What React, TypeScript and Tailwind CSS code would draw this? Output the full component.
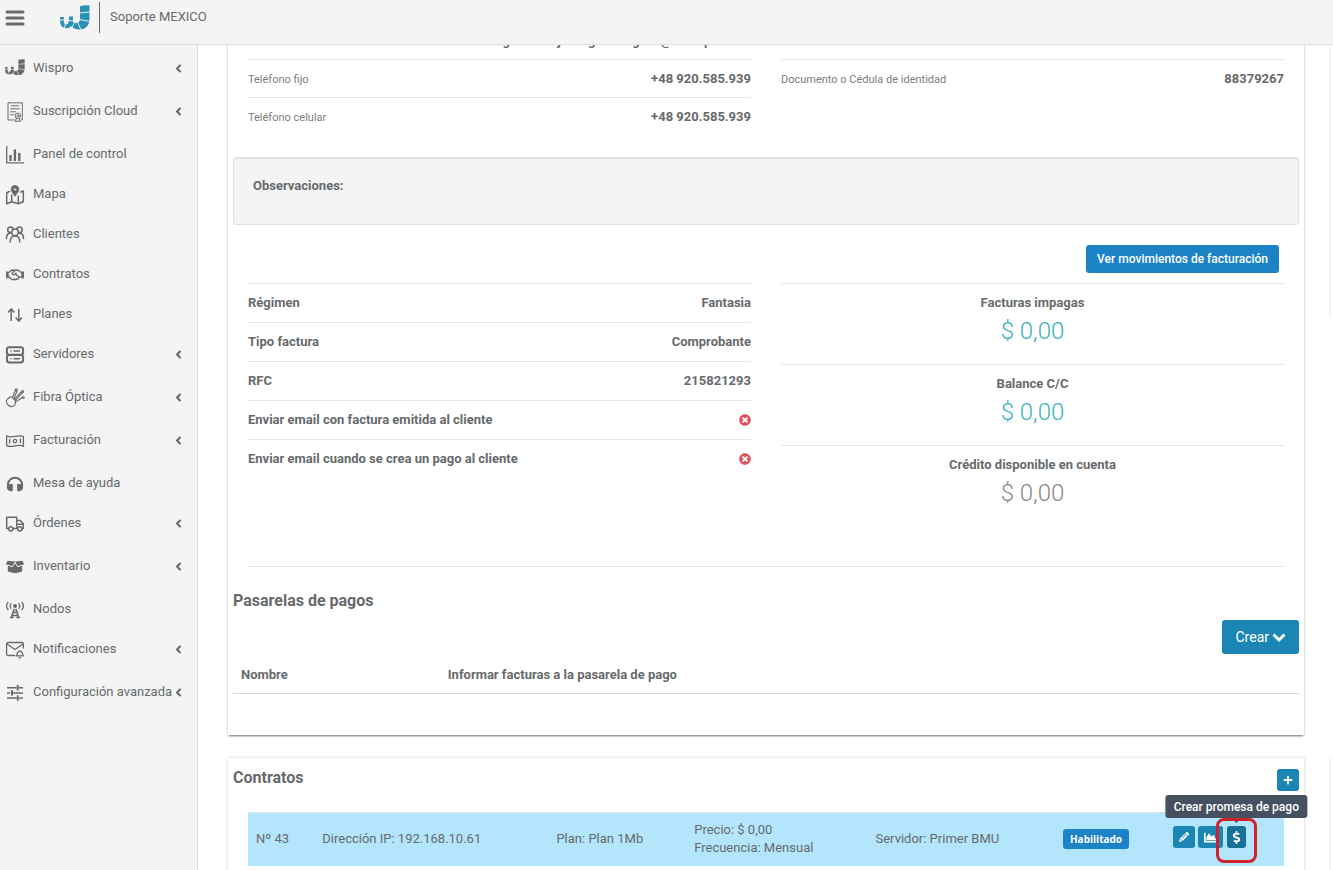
import React from "react";
import {
  FaAngleLeft,
  FaBoxOpen,
  FaChartArea,
  FaDollarSign,
  FaPlus,
  FaRegHandshake,
  FaTimesCircle,
} from "react-icons/fa";
import { FaPencil } from "react-icons/fa6";

function Logo({ className }: { className: string }) {
  return (
    <svg viewBox="0 0 30 25" className={className} fill="none" aria-hidden="true">
      <path d="M2 12v4c0 3.600 1.800 5.400 4.200 5.400s4-2 4.400-5.200" stroke="currentColor" strokeWidth="3.800" />
      <path d="M11 11.500v5c.3 2.500 1.400 3.800 3.400 4.300" stroke="currentColor" strokeWidth="4" />
      <path
        d="M20 1.200Q25-.3 29.500.5V14c0 6.500-4 10.500-10 10.500-4 0-7-1.500-8.500-4.500l3.500-2.500c2.500 1.500 5.500 0 5.500-3.500z"
        fill="currentColor"
      />
      <g stroke="#f4f4f4" strokeWidth="0.900">
        <path d="M19 8 30 7M19.500 14.500l10.500 2M17.500 17l3.500 8M0 15.200l4.500-.5M4 24l1.500-5M8.600 15.500l5 .5M11.500 23.500l3-5.500" />
      </g>
    </svg>
  );
}

type IconProps = { children: React.ReactNode };

function Glyph({ children }: IconProps) {
  return (
    <svg
      viewBox="0 0 20 20"
      className="size-5"
      fill="none"
      stroke="currentColor"
      strokeWidth="1.500"
      strokeLinecap="round"
      strokeLinejoin="round"
      aria-hidden="true"
    >
      {children}
    </svg>
  );
}

const icons = {
  certificate: (
    <Glyph>
      <g strokeWidth="1">
        <path d="M9 18H3V.8h14.300V18h-1" />
        <path d="M6.500 3.800h7M5.500 6.800h9M5.500 9.800h5M5.500 12.800h3" />
        <circle cx="12.800" cy="13.800" r="2.700" />
        <circle cx="12.800" cy="13.800" r="0.900" />
        <path d="M11.200 16.300 10.500 20l2.300-1 2.300 1-.7-3.700" />
      </g>
    </Glyph>
  ),
  chart: (
    <Glyph>
      <g strokeLinecap="butt">
        <path d="M1.700 1v16.800H19" strokeWidth="1.300" />
        <path d="M5.500 10v6M9.900 4.500V16M14.300 8v8" strokeWidth="2.400" />
      </g>
    </Glyph>
  ),
  map: (
    <Glyph>
      <path
        d="M10 .5a3.900 3.900 0 0 0-3.900 3.900C6.100 7 8.800 9 10 11.500 11.200 9 13.900 7 13.900 4.400A3.900 3.900 0 0 0 10 .5zm0 2.500a1.400 1.400 0 1 1 0 2.800A1.400 1.400 0 0 1 10 3z"
        fill="currentColor"
        stroke="currentColor"
        strokeWidth="0.600"
      />
      <path d="M4.500 6.500 1.700 7.800v11l5-2 6.600 2 5-2V6l-2.600 1M6.700 10v6.800M13.300 11v7.800" />
    </Glyph>
  ),
  people: (
    <Glyph>
      <circle cx="5.500" cy="4.800" r="2.800" />
      <circle cx="14.500" cy="4.800" r="2.800" />
      <circle cx="10" cy="7.300" r="3.300" fill="#f4f4f4" />
      <path d="M5.200 17c0-4 2-6 4.800-6s4.800 2 4.800 6M1.500 13.500c0-3.200 1.200-5.200 4-5.400M18.500 13.500c0-3.200-1.200-5.200-4-5.400" />
    </Glyph>
  ),
  arrows: (
    <Glyph>
      <g strokeLinecap="butt" strokeLinejoin="miter">
        <path d="M6.200 16V4.200M3 7.400l3.200-3.500 3.200 3.500M13.800 4v11.800M10.600 12.600l3.200 3.500 3.200-3.500" />
      </g>
    </Glyph>
  ),
  server: (
    <Glyph>
      <rect x="1.900" y="2.200" width="16.200" height="7.600" rx="2.400" strokeWidth="2" />
      <rect x="1.900" y="9.900" width="16.200" height="7.600" rx="2.400" strokeWidth="2" />
      <path d="M5.800 6h.1M9 6h5.500M5.800 13.700h.1M9 13.700h5.500" />
    </Glyph>
  ),
  fiber: (
    <Glyph>
      <g strokeWidth="1.100">
        <path d="M4 10c-2.400 1-3.300 3.200-2 5.500 1.200 2.200 3.200 3.400 5.300 3 2.300-.5 3.500-2.700 3-4.700" />
        <path d="M4 10c.3-1.300 1.900-1.600 2.900-.6l3 2.800c.8.800.7 1.800.4 2.600" />
        <path d="M7.500 9.200 10.200 2.500M9 10.200 12 3M9.500 11.200l7-7.500M10.500 12.200l7-7.500M11.300 13.500l5.700-3.700" />
        <circle cx="11.300" cy="1.900" r="1" />
        <circle cx="17.600" cy="3.600" r="1" />
        <circle cx="18.200" cy="9.500" r="1" />
      </g>
    </Glyph>
  ),
  bill: (
    <Glyph>
      <g strokeWidth="1.300">
        <path d="M1.600 4.800c3 1.800 5.600 1.200 8.400.6 2.900-.7 5.800-1 8.400.2v9.800c-3-1.800-5.600-1.200-8.400-.6-2.900.7-5.800 1-8.400-.2z" />
        <circle cx="10" cy="10.100" r="1.700" />
        <path d="M4.600 8.500v3.500M15.400 8v3.500" />
      </g>
    </Glyph>
  ),
  headphones: (
    <Glyph>
      <path d="M2.900 13.500v-2.700a7.100 7.100 0 0 1 14.200 0v2.700" strokeWidth="1.900" />
      <path
        d="M7.800 10v7.200H5.600C3.200 17.200 2 15.500 2 13.600S3.200 10 5.600 10zM12.200 10v7.200h2.200c2.400 0 3.600-1.700 3.600-3.600S16.800 10 14.400 10z"
        fill="currentColor"
        stroke="none"
      />
    </Glyph>
  ),
  truck: (
    <Glyph>
      <path d="M3.500 14.500H1.700V3.300h10v11.200H8.200M11.700 6.500h3.600l3 3.500v4.500h-1.100" />
      <circle cx="5.800" cy="14.800" r="2.100" />
      <circle cx="14.800" cy="14.800" r="2.100" />
      <path d="M12.500 10.300h5.300" />
    </Glyph>
  ),
  tower: (
    <Glyph>
      <g strokeWidth="1.300">
        <path d="M3 2.500c-1.700 2-1.700 5 0 7M17 2.500c1.700 2 1.700 5 0 7M6 3.800c-1 1.300-1 3.100 0 4.400M14 3.800c1 1.300 1 3.100 0 4.400" />
        <circle cx="10" cy="6" r="1.300" fill="currentColor" />
        <path d="M9 9.500 6.300 17.500M11 9.500l2.700 8M8.300 12.500h3.400M7.300 15.500h5.400M5.500 17.500h2.500M12 17.500h2.500" strokeWidth="1.600" />
      </g>
    </Glyph>
  ),
  mail: (
    <Glyph>
      <g strokeWidth="1.300">
        <path d="M9.500 15.500H3.200a1.600 1.600 0 0 1-1.600-1.600V4.100a1.600 1.600 0 0 1 1.600-1.600h13.600a1.600 1.600 0 0 1 1.600 1.600V8M2 4l8 5.500L18 4" />
        <path d="M11.200 15.800c1.200-1 .8-4.800 3.600-5 2.800.2 2.400 4 3.600 5zM14 17.800h1.600" />
      </g>
    </Glyph>
  ),
  tune: (
    <Glyph>
      <g strokeLinecap="butt">
        <path d="M2 4.700h9.500M14 4.700h4M2 9.900h3M8 9.900h10M2 15.100h9.500M14 15.100h4" />
        <path d="M12.700 2v5.400M7 7.200v5.400M12.700 12.400v5.400" strokeWidth="2" />
      </g>
    </Glyph>
  ),
};

type NavItem = { label: string; icon: React.ReactNode; expandable?: boolean };

const navItems: NavItem[] = [
  { label: "Wispro", icon: <Logo className="mb-1 w-5" />, expandable: true },
  { label: "Suscripción Cloud", icon: icons.certificate, expandable: true },
  { label: "Panel de control", icon: icons.chart },
  { label: "Mapa", icon: icons.map },
  { label: "Clientes", icon: icons.people },
  { label: "Contratos", icon: <FaRegHandshake className="size-[18px]" /> },
  { label: "Planes", icon: icons.arrows },
  { label: "Servidores", icon: icons.server, expandable: true },
  { label: "Fibra Óptica", icon: icons.fiber, expandable: true },
  { label: "Facturación", icon: icons.bill, expandable: true },
  { label: "Mesa de ayuda", icon: icons.headphones },
  { label: "Órdenes", icon: icons.truck, expandable: true },
  { label: "Inventario", icon: <FaBoxOpen className="size-[18px]" />, expandable: true },
  { label: "Nodos", icon: icons.tower },
  { label: "Notificaciones", icon: icons.mail, expandable: true },
  { label: "Configuración avanzada", icon: icons.tune, expandable: true },
];

function Sidebar() {
  return (
    <nav className="w-[198px] shrink-0 overflow-hidden border-r border-[#dfdfdf] bg-[#f4f4f4] pt-[3px]">
      <ul>
        {navItems.map((item) => (
          <li key={item.label} className={item.expandable ? "pb-[3px]" : ""}>
            <a href="#" className="flex h-10 items-center pr-3 pl-[5px]">
              <span className="flex w-5 justify-center pt-0.5">{item.icon}</span>
              <span className="ml-2 flex-1 whitespace-nowrap">{item.label}</span>
              {item.expandable && <FaAngleLeft className="-ml-2 size-[13px] shrink-0" />}
            </a>
          </li>
        ))}
      </ul>
    </nav>
  );
}

function ContactRow({ label, value }: { label?: string; value: string }) {
  return (
    <div className="flex h-[38px] items-center justify-between border-t border-[#e7e7e7]">
      <dt className="pt-0.5 text-[11px] text-[#7b7d7f]">{label}</dt>
      <dd className="font-bold">{value}</dd>
    </div>
  );
}

function BillingRow({ label, children }: { label: string; children: React.ReactNode }) {
  return (
    <div className="flex h-[39px] items-center justify-between border-t border-[#e7e7e7] font-bold">
      <dt>{label}</dt>
      <dd>{children}</dd>
    </div>
  );
}

function Amount({ label, value, muted }: { label: string; value: string; muted?: boolean }) {
  return (
    <div className="h-[81px] border-t border-[#e7e7e7] pt-2.5 text-center">
      <dt className="font-bold">{label}</dt>
      <dd className={`mt-[5px] text-2xl leading-7 font-light ${muted ? "text-[#888888]" : "text-[#3cb3b8]"}`}>
        {value}
      </dd>
    </div>
  );
}

const No = () => <FaTimesCircle className="size-3 text-[#de5360]" role="img" aria-label="No" />;

function ClientCard() {
  return (
    <section className="-mt-6 bg-white px-[5px] pb-[41px] shadow-[0_2px_2px_-1px_rgba(0,0,0,0.5),0_0_3px_rgba(0,0,0,0.2)]">
      <div className="grid grid-cols-2 gap-[30px] px-[15px]">
        <dl>
          <ContactRow value="rodrigo.manu.jarre.gutier.agnes@example.com" />
          <ContactRow label="Teléfono fijo" value="+48 920.585.939" />
          <ContactRow label="Teléfono celular" value="+48 920.585.939" />
        </dl>
        <dl className="pt-[38px]">
          <ContactRow label="Documento o Cédula de identidad" value="88379267" />
        </dl>
      </div>

      <div className="mt-[22px] h-[68px] rounded-[3px] border border-[#e0e0e0] bg-[#f4f4f4] px-[19px] pt-[19px] shadow-[inset_0_1px_1px_rgba(0,0,0,0.08)]">
        <strong>Observaciones:</strong>
      </div>

      <div className="mt-5 flex justify-end pr-5">
        <button type="button" className="h-7 rounded-[3px] bg-[#1c84c6] px-[11px] text-xs font-medium text-white">
          Ver movimientos de facturación
        </button>
      </div>

      <div className="mx-[15px] mt-2.5 grid grid-cols-2 gap-[30px] border-b border-[#e7e7e7] pb-10">
        <dl>
          <BillingRow label="Régimen">Fantasia</BillingRow>
          <BillingRow label="Tipo factura">Comprobante</BillingRow>
          <BillingRow label="RFC">215821293</BillingRow>
          <BillingRow label="Enviar email con factura emitida al cliente">
            <No />
          </BillingRow>
          <BillingRow label="Enviar email cuando se crea un pago al cliente">
            <No />
          </BillingRow>
        </dl>
        <dl>
          <Amount label="Facturas impagas" value="$ 0,00" />
          <Amount label="Balance C/C" value="$ 0,00" />
          <Amount label="Crédito disponible en cuenta" value="$ 0,00" muted />
        </dl>
      </div>

      <h2 className="mt-6 text-base leading-5 font-bold">Pasarelas de pagos</h2>
      <div className="mt-[9px] flex justify-end">
        <button
          type="button"
          className="flex h-[34px] items-center gap-[3px] rounded-[3px] bg-[#1b86b4] px-[13px] text-sm text-white"
        >
          Crear
          <svg viewBox="0 0 14 14" className="size-3.5" fill="none" stroke="currentColor" strokeWidth="3" aria-hidden="true">
            <path d="M1.500 4.500 7 10l5.500-5.500" />
          </svg>
        </button>
      </div>
      <table className="mt-1 w-full table-fixed text-left">
        <thead>
          <tr className="h-[35px] border-b border-[#d9d9d9]">
            <th className="w-[19.400%] px-2">Nombre</th>
            <th className="px-2">Informar facturas a la pasarela de pago</th>
          </tr>
        </thead>
      </table>
    </section>
  );
}

function ContractsCard() {
  const action = "flex h-[22px] items-center justify-center rounded-[3px] bg-[#1b86b4] text-white";
  return (
    <section className="mt-[23px] grow bg-white px-[5px] pt-2.5 pb-10 shadow-[0_0_3px_rgba(0,0,0,0.2)]">
      <div className="flex justify-between">
        <h2 className="text-base leading-5 font-bold">Contratos</h2>
        <button type="button" aria-label="Agregar contrato" className={`mt-px w-[22px] ${action}`}>
          <FaPlus className="size-2.5" />
        </button>
      </div>
      <div className="mt-[21px] px-[15px]">
        <table className="w-full table-fixed text-left">
          <tbody>
            <tr className="h-[54px] border-t border-[#d5e4ea] bg-[#b3e5fc]">
              <td className="w-[6.400%] px-2 whitespace-nowrap">Nº 43</td>
              <td className="w-[22.600%] px-2">Dirección IP: 192.168.10.61</td>
              <td className="w-[13.300%] px-2">Plan: Plan 1Mb</td>
              <td className="w-[17.500%] px-2">
                Precio: $ 0,00
                <br />
                Frecuencia: Mensual
              </td>
              <td className="w-[18.100%] px-2">Servidor: Primer BMU</td>
              <td className="w-[10.600%] px-2">
                <span className="flex h-5 w-[66px] items-center justify-center rounded-[3px] bg-[#1c84c6] font-['Open_Sans',sans-serif] text-[10px] font-bold text-white">
                  Habilitado
                </span>
              </td>
              <td className="px-2 pb-1">
                <div className="flex gap-[3px]">
                  <button type="button" aria-label="Editar" className={`w-[22px] ${action}`}>
                    <FaPencil className="size-2.5" />
                  </button>
                  <button type="button" aria-label="Consumo" className={`w-[25px] ${action}`}>
                    <FaChartArea className="size-[13px]" />
                  </button>
                  <div className="relative ml-px">
                    <button
                      type="button"
                      aria-describedby="promise-tip"
                      aria-label="Crear promesa"
                      className="flex h-[22px] w-[19px] items-center justify-center rounded-[3px] bg-[#167299] text-white"
                    >
                      <FaDollarSign className="size-[13px]" />
                    </button>
                    <span
                      id="promise-tip"
                      role="tooltip"
                      className="absolute bottom-full left-1/2 mb-2 flex h-[23px] -translate-x-1/2 items-center rounded-[3px] bg-[#455160] px-2 text-xs font-medium whitespace-nowrap text-white"
                    >
                      Crear promesa de pago
                      <svg viewBox="0 0 10 5" className="absolute top-full left-1/2 h-[5px] w-2.5 -translate-x-1/2">
                        <path d="M0 0h10L5 5z" fill="#455160" />
                      </svg>
                    </span>
                    <span className="pointer-events-none absolute -inset-x-[11px] -top-2 -bottom-[15px] rounded-lg border-[3px] border-[#d3202d]" />
                  </div>
                </div>
              </td>
            </tr>
          </tbody>
        </table>
      </div>
    </section>
  );
}

export default function App() {
  return (
    <div className="flex h-screen flex-col overflow-hidden bg-white font-[Roboto,sans-serif] text-[13px] leading-[18px] text-[#676a6c]">
      <header className="flex h-[45px] shrink-0 items-start border-b border-[#dfdfdf] bg-[#f4f4f4]">
        <button type="button" aria-label="Menú" className="mt-2 ml-[5px]">
          <svg viewBox="0 0 20 20" className="size-5" stroke="currentColor" strokeWidth="3" strokeLinecap="round">
            <path d="M2 4h16M2 10h16M2 16h16" />
          </svg>
        </button>
        <a href="#" aria-label="Inicio" className="mt-[5px] ml-[35px] text-[#2a93b4]">
          <Logo className="w-[30px]" />
        </a>
        <span className="mt-0.5 ml-[9px] h-[31px] w-px bg-[#676a6c]" />
        <span className="mt-2 ml-2.5">Soporte MEXICO</span>
      </header>
      <div className="flex min-h-0 flex-1">
        <Sidebar />
        <main className="flex min-w-0 flex-1 gap-[27px] overflow-hidden pl-[30px]">
          <div className="flex min-w-0 flex-1 flex-col">
            <ClientCard />
            <ContractsCard />
          </div>
          <aside className="flex w-0.5 shrink-0 flex-col">
            <div className="h-[273px] shadow-[0_0_3px_rgba(0,0,0,0.2)]" />
            <div className="mt-[440px] grow shadow-[0_0_3px_rgba(0,0,0,0.2)]" />
          </aside>
        </main>
      </div>
    </div>
  );
}
